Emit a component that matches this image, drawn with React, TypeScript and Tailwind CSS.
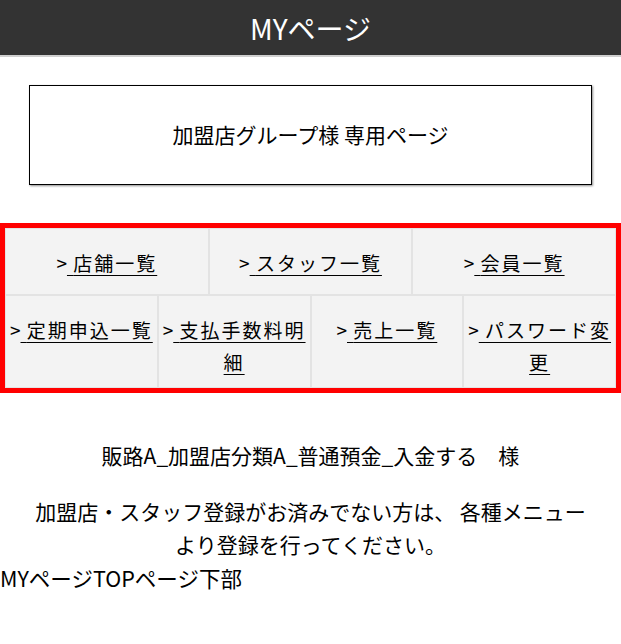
import React from "react";

const row1 = ["店舗一覧", "スタッフ一覧", "会員一覧"];
const row2 = ["定期申込一覧", "支払手数料明細", "売上一覧", "パスワード変更"];

function Item({ label, tall }: { label: string; tall?: boolean }) {
  return (
    <div
      className={`${tall ? "h-[93px]" : "h-[67px]"} border border-[#e3e3e3] bg-[#f3f3f3] px-0 pt-[18px] text-center text-[19px] leading-[32px] tracking-[2px]`}
    >
      <a href="#" className="underline underline-offset-[4px] decoration-[1px] text-black">
        <span className="inline-block no-underline tracking-[0px]">&gt;</span> {label}
      </a>
    </div>
  );
}

export default function App() {
  return (
    <div className="w-[621px] bg-white text-black font-['Noto_Sans_CJK_JP',sans-serif]">
      <header className="h-[57px] bg-[#333333] border-b-2 border-[#cfcfcf] flex items-center justify-center text-white text-[28px]">
        MYページ
      </header>
      <div className="px-[29px] pt-[28px]">
        <div className="h-[100px] border border-black shadow-[1px_1px_2px_rgba(0,0,0,0.45)] flex items-center justify-center text-[21px]">
          加盟店グループ様 専用ページ
        </div>
      </div>
      <div className="mt-[38px] border-[5px] border-[#ff0000]">
        <div className="grid grid-cols-3">
          {row1.map((l) => (
            <Item key={l} label={l} />
          ))}
        </div>
        <div className="grid grid-cols-4">
          {row2.map((l) => (
            <Item key={l} label={l} tall />
          ))}
        </div>
      </div>
      <div className="mt-[46px] text-[21px] leading-[33px]">
        <p className="text-center">販路A_加盟店分類A_普通預金_入金する　様</p>
        <p className="mt-[23px] text-center px-[30px]">
          加盟店・スタッフ登録がお済みでない方は、 各種メニューより登録を行ってください。
        </p>
        <p className="text-[21.5px]">MYページTOPページ下部</p>
      </div>
    </div>
  );
}
